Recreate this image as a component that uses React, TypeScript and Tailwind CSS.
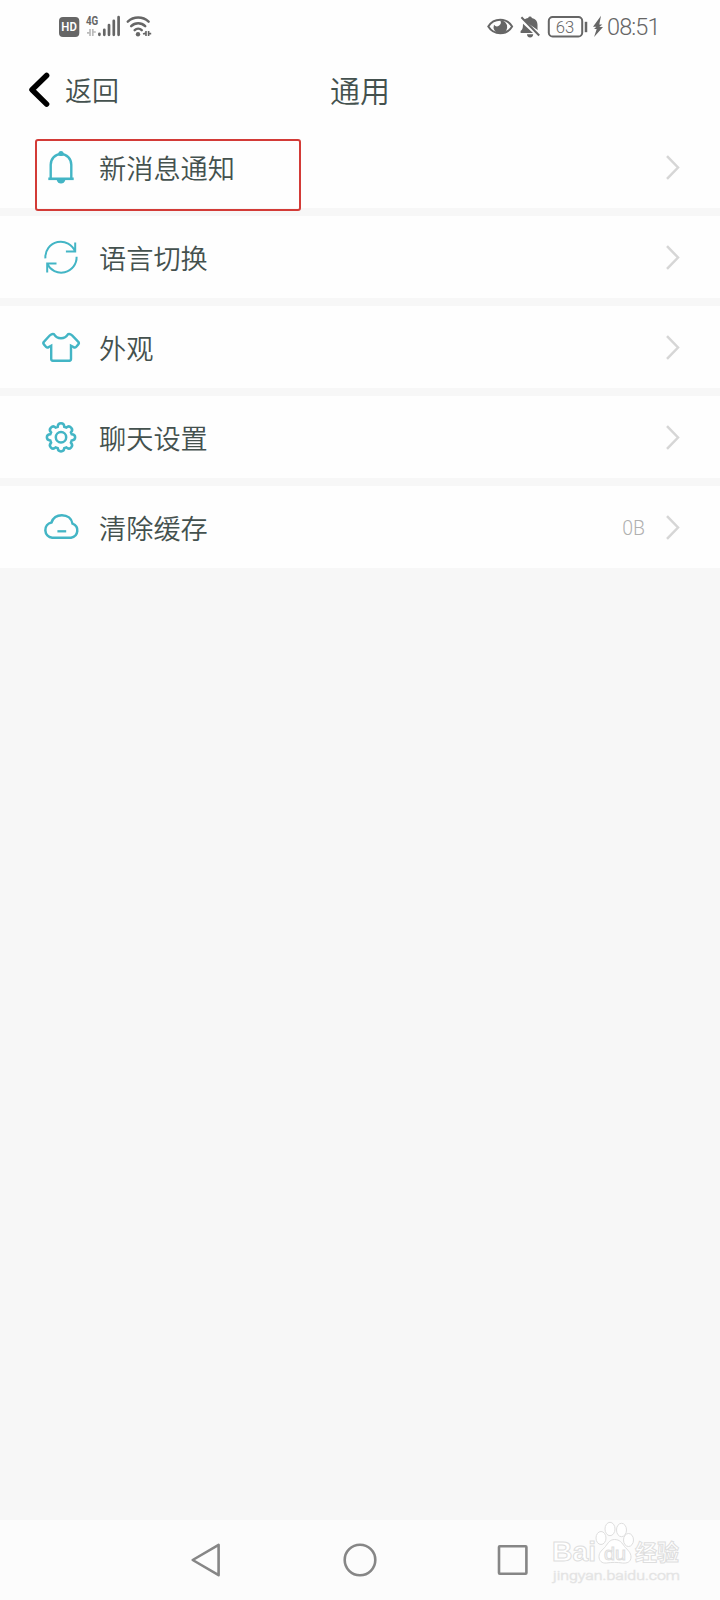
import React from 'react';

interface SettingItem {
  id: string;
  title: string;
  value?: string;
  icon: React.ReactNode;
}

const items: SettingItem[] = [
  {
    id: 'notifications',
    title: '新消息通知',
    icon: (
      <>
        <path d="M10 31.5V17.5a10.3 10.8 0 0 1 20.6 0v14" strokeWidth="2.4" />
        <path d="M7.6 31.5h25.4" strokeWidth="2.6" />
        <circle cx="20.3" cy="6.2" r="2.6" fill="currentColor" stroke="none" />
        <path d="M16 32h8.6a4.3 4.3 0 0 1-8.6 0z" fill="currentColor" stroke="none" />
      </>
    )
  },
  {
    id: 'language',
    title: '语言切换',
    icon: (
      <>
        <path d="M4.7 21A15.4 15.4 0 0 1 34.5 14.5M34.5 5.3v9h-9.3" strokeWidth="2" />
        <path d="M35.9 19.5A15.4 15.4 0 0 1 6.5 26.4M6.5 35.3v-9h9.3" strokeWidth="2" />
      </>
    )
  },
  {
    id: 'appearance',
    title: '外观',
    icon: (
      <path
        d="M13.2 6.9C11.6 6.3 10.4 7 9.2 8L3.4 14.3c-1 1-1 1.9-.2 2.8l2.2 2.6c.8.8 1.8.7 2.7 0l2.4-1.3v13.4c0 1 .6 1.6 1.6 1.6h16.600c1 0 1.600-.6 1.600-1.600V18.4l2.4 1.3c.9.7 1.9.8 2.7 0l2.2-2.6c.8-.9.8-1.8-.2-2.8L31.4 8c-1.2-1-2.4-1.7-4-1.1-1.600 2.6-4 4.1-7.1 4.1s-5.5-1.5-7.1-4.1z"
        strokeWidth="2.4"
      />
    )
  },
  {
    id: 'chat',
    title: '聊天设置',
    icon: (
      <>
        <path
          d="M17 9.5C17.1 4.9 23.5 4.9 23.6 9.5L25.6 10.3C28.9 7.1 33.5 11.7 30.2 15L31 17C35.6 17.1 35.6 23 31 23.2L30.2 25.4C33.5 28.9 28.9 33.3 25.6 30.1L23.6 30.9C23.3 35.2 17.3 35.2 17 30.9L15 30.1C11.7 33.3 7.1 28.9 10.4 25.4L9.6 23.2C5 23 5 17.1 9.6 17L10.4 15C7.1 11.7 11.7 7.1 15 10.3Z"
          strokeWidth="2.5"
        />
        <circle cx="20.3" cy="20" r="5.2" strokeWidth="2.5" />
      </>
    )
  },
  {
    id: 'cache',
    title: '清除缓存',
    value: '0B',
    icon: (
      <>
        <path
          d="M11.5 30.4h18.8a7.3 7.3 0 0 0 1.5-14.1c-.9-5-5-8.3-10.6-8.3-5 0-8.9 2.9-10.4 7.2a7.7 7.7 0 0 0 .7 15.2z"
          strokeWidth="2.5"
        />
        <path d="M16.7 24h8.8" strokeWidth="2.3" />
      </>
    )
  }
];

const StatusBar = () => (
  <div className="flex h-[53px] items-center justify-between pl-[58px] pr-[59px] text-[#666]">
    <svg className="h-8 w-[98px]" viewBox="58 11 98 32" fill="none" stroke="currentColor">
      <rect x="59" y="17" width="20.3" height="20" rx="4" fill="currentColor" stroke="none" />
      <text x="69.1" y="31.4" textAnchor="middle" fontSize="12.5" fontWeight="600" textLength="15.5" lengthAdjust="spacingAndGlyphs" fill="#fff" stroke="none" fontFamily="Roboto, sans-serif">HD</text>
      <text x="86" y="25.3" fontSize="12.5" fontWeight="700" textLength="12.3" lengthAdjust="spacingAndGlyphs" fill="currentColor" stroke="none" fontFamily="Roboto, sans-serif">4G</text>
      <path d="M90 29v7M87 32.8h2.8M92.8 29v7M92.8 32h3" stroke="#bbb" strokeWidth="1.7" />
      <path d="M99.4 33.8v1M104.3 29.8v5M109 25v9.8M113.8 20.8v14M118.6 17.2v17.6" strokeWidth="2.7" strokeLinecap="round" />
      <path d="M127.8 21.6a15.5 15.5 0 0 1 20.8 0M131.2 26.2a10 10 0 0 1 14 0M134.7 30.2a5 5 0 0 1 7 0" strokeWidth="2.5" strokeLinecap="round" />
      <circle cx="138" cy="34.2" r="2.2" fill="currentColor" stroke="none" />
      <path d="M146 31v5M143 34l3-1M148.6 31v5M148.6 33.6h2.6" strokeWidth="1.6" />
    </svg>
    <div className="flex items-center">
      <svg className="mr-px h-8 w-[120px]" viewBox="486 10.5 120 32" fill="none" stroke="currentColor">
        <path d="M488.3 26c5.5-9 18.5-9 23.8 0-5.3 9-18.3 9-23.8 0z" strokeWidth="2" />
        <path d="M500 19.8a6.8 6.8 0 1 1-6 4.4 3.7 3.7 0 0 0 6-4.4z" fill="currentColor" stroke="none" />
        <path d="M523.5 19.8c1.3-1.5 3-2.2 4.6-2.4a2 2 0 0 1 3.8 0c4 .8 5.6 3.5 5.6 7v3.8c0 .6.2 1 .5 1.6z" fill="currentColor" stroke="none" />
        <path d="M523 23.3 533 32.4h-12.4v-1.8c1.8-1.3 2.2-3 2.3-5zM527 33.8h6.2a3.1 3.1 0 0 1-6.2 0z" fill="currentColor" stroke="none" />
        <path d="M521.4 16.8 539.2 35" strokeWidth="2" />
        <rect x="548.8" y="16.6" width="33.4" height="19.4" rx="3.8" strokeWidth="2" />
        <text x="565" y="32.3" textAnchor="middle" fontSize="17" fontWeight="300" textLength="18.5" lengthAdjust="spacingAndGlyphs" fill="currentColor" stroke="none" fontFamily="Roboto, sans-serif">63</text>
        <path d="M586 21.3v10.4" strokeWidth="2.5" />
        <path d="M601 15.3 593 26.2h3.3l-2.2 2.4h2.6l-2.6 8 8.9-10h-3.7l3-2.7h-3z" fill="currentColor" stroke="none" />
      </svg>
      <span className="w-[54px] whitespace-nowrap font-[Roboto,sans-serif] text-[23.5px] font-light leading-8 tracking-[-0.9px]">08:51</span>
    </div>
  </div>
);

const Header = () => (
  <header className="grid h-[73px] grid-cols-3 items-center">
    <button className="ml-[27px] flex items-center gap-[15px]">
      <svg className="h-9 w-[23px]" viewBox="0 0.5 23 36" fill="none" stroke="#000" strokeWidth="5.5" strokeLinecap="round" strokeLinejoin="round">
        <path d="M19.6 4 5 18.2 19.6 32.6" />
      </svg>
      <span className="pt-px text-[27px] leading-9">返回</span>
    </button>
    <h1 className="pb-0.5 text-center text-[30px] leading-9">通用</h1>
  </header>
);

const SettingRow = ({ item }: { item: SettingItem }) => (
  <div className="flex h-[82px] items-center bg-[#fefefe] pl-[41px] pr-10">
    <svg className="h-10 w-10 text-[#43b5c5]" viewBox="0.3 -0.3 40 40" fill="none" stroke="currentColor" overflow="visible">
      {item.icon}
    </svg>
    <span className="ml-[18px] text-[27.2px] leading-9">{item.title}</span>
    <div className="ml-auto flex items-center gap-[21px]">
      {item.value && (
        <span className="pt-1 font-[Roboto,sans-serif] text-[19.5px] leading-6 text-[#b0b0b0]">{item.value}</span>
      )}
      <svg className="h-[26px] w-3.5" viewBox="0 -0.5 14 26" fill="none" stroke="#d6d6d6" strokeWidth="2.5">
        <path d="M1 1.6 12 13 1 24.4" />
      </svg>
    </div>
  </div>
);

const Watermark = () => (
  <svg className="absolute bottom-3 right-9 h-[70px] w-[136px]" viewBox="548 1518 136 70" fill="#fff" stroke="#dedede" strokeWidth="1">
    <g fontFamily='"Liberation Sans", "Noto Sans CJK SC", sans-serif' fontWeight="700">
      <text x="552" y="1561" fontSize="27" textLength="44" lengthAdjust="spacingAndGlyphs">Bai</text>
      <path d="M614.5 1539.5c5.5 0 7.5 3.5 10 7 3 3.5 6.5 6 6.5 10.5 0 5-4 6.5-8.5 6-5-.8-11-.8-16 0-4.5.5-7.5-2-7.5-6.5s3.5-6.5 6.5-10c2.5-3.5 4.5-7 9-7z" />
      <ellipse cx="601" cy="1538" rx="5" ry="6.5" />
      <ellipse cx="610" cy="1529" rx="5" ry="6.7" />
      <ellipse cx="621.5" cy="1530" rx="5" ry="6.7" />
      <ellipse cx="628.5" cy="1540" rx="5" ry="6.5" />
      <text x="604" y="1560" fontSize="19" fontWeight="400" textLength="22" lengthAdjust="spacingAndGlyphs">du</text>
      <text x="635" y="1560" fontSize="22" textLength="44" lengthAdjust="spacingAndGlyphs">经验</text>
    </g>
    <text x="553" y="1579.5" fontSize="13.5" textLength="127" lengthAdjust="spacingAndGlyphs" strokeWidth="0.7" stroke="#e4e4e4" fontFamily="Roboto, sans-serif">jingyan.baidu.com</text>
  </svg>
);

const NavigationBar = () => (
  <nav className="relative flex h-20 items-center justify-center bg-[#fcfcfc]">
    <svg className="h-9 w-[340px]" viewBox="190 1542 340 36" fill="none" stroke="#868686" strokeWidth="2.6" strokeLinejoin="round">
      <path d="M192.7 1560 218.6 1544.8v30.4z" />
      <circle cx="360" cy="1560" r="15.3" />
      <rect x="499" y="1546.3" width="27.4" height="27.4" rx="0.8" />
    </svg>
    <Watermark />
  </nav>
);

const App = () => {
  return (
    <div className="flex h-[1600px] w-[720px] flex-col overflow-hidden bg-[#f7f7f7] font-['Noto_Sans_CJK_SC',sans-serif] font-[350] text-[#44514e]">
      <div className="bg-[#fefefe]">
        <StatusBar />
        <Header />
      </div>
      <main className="relative flex flex-1 flex-col gap-2">
        {items.map((item) => (
          <SettingRow key={item.id} item={item} />
        ))}
        <div className="pointer-events-none absolute left-[35px] top-[13px] h-[72px] w-[266px] rounded-[3px] border-2 border-[#d33b37]" />
      </main>
      <NavigationBar />
    </div>
  );
};

export default App;
